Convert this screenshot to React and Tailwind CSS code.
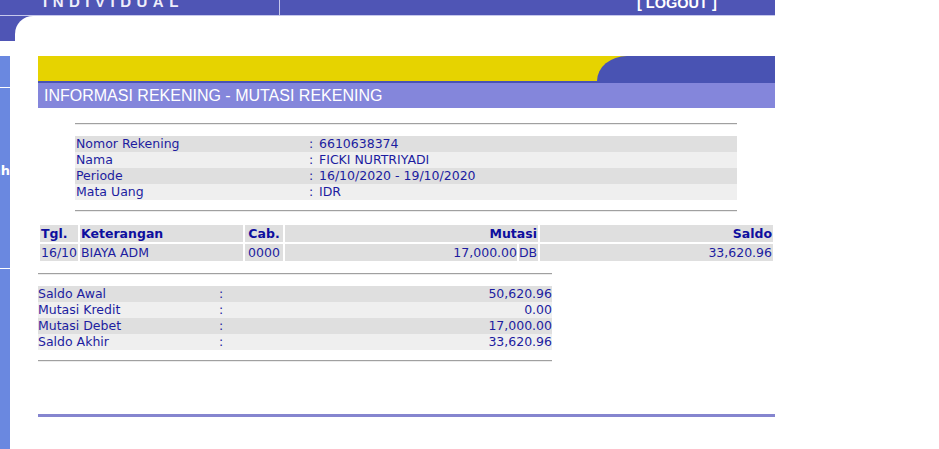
const info = [
  ["Nomor Rekening", "6610638374"],
  ["Nama", "FICKI NURTRIYADI"],
  ["Periode", "16/10/2020 - 19/10/2020"],
  ["Mata Uang", "IDR"],
];

const summary = [
  ["Saldo Awal", "50,620.96"],
  ["Mutasi Kredit", "0.00"],
  ["Mutasi Debet", "17,000.00"],
  ["Saldo Akhir", "33,620.96"],
];

function Rule({ className }) {
  return <div className={"h-0 border-t border-b border-t-[#a0a0a0] border-b-[#ececec] " + className}></div>;
}

export default function App() {
  return (
    <div className="w-[939px] h-[449px] bg-white overflow-hidden font-['DejaVu_Sans',Verdana,sans-serif]">
      {/* Header */}
      <div className="w-[775px] h-[16px] flex bg-[#4f55b5] border-b border-[#c6c8ec] overflow-hidden">
        <div className="w-[280px] shrink-0 pl-[43px] border-r border-[#c6c8ec] overflow-hidden">
          <div className="-mt-[6px] leading-[16px] text-[15px] font-bold tracking-[5.5px] text-[#eeeefa] font-['Liberation_Sans',Arial,sans-serif]">
            INDIVIDUAL
          </div>
        </div>
        <div className="flex-1 pl-[357px] overflow-hidden">
          <div className="-mt-[5px] leading-[16px] text-[14.5px] font-bold text-white whitespace-nowrap font-['Liberation_Sans',Arial,sans-serif]">
            [ LOGOUT ]
          </div>
        </div>
      </div>

      {/* corner */}
      <div className="w-[775px] h-[25px] flex bg-[#4f55b5]">
        <div className="ml-[15px] flex-1 bg-white rounded-tl-[18px]"></div>
      </div>

      <div className="flex mt-[15px]">
        {/* Sidebar */}
        <div className="w-[10px] h-[393px] shrink-0 bg-[#6a88e0] flex flex-col">
          <div className="h-[32px] border-b border-white"></div>
          <div className="h-[181px] border-b border-white overflow-hidden flex justify-end whitespace-nowrap pt-[75px]">
            <span className="text-[13px] leading-[16px] font-bold text-white">Pindah</span>
          </div>
          <div className="flex-1"></div>
        </div>

        {/* Content */}
        <div className="ml-[28px] w-[737px]">
          <div className="h-[25px] flex bg-[#e6d300]">
            <div className="flex-1"></div>
            <div className="w-[178px] bg-[#4953b3] rounded-tl-[30px_25px]"></div>
          </div>
          <div className="h-[2px] bg-[#4953b3]"></div>
          <div className="h-[25px] bg-[#8486db] pl-[6px] text-white text-[16px] leading-[26px] font-['Liberation_Sans',Arial,sans-serif]">
            INFORMASI REKENING - MUTASI REKENING
          </div>

          <Rule className="mt-[15px] ml-[37px] w-[662px]" />

          <div className="mt-[11px] ml-[37px] w-[662px] text-[12.5px] text-[#1c1ca0]">
            {info.map(([label, value], i) => (
              <div key={label} className={"flex h-[16px] leading-[16px] " + (i % 2 === 0 ? "bg-[#dfdfdf]" : "bg-[#efefef]")}>
                <div className="w-[234px] pl-px">{label}</div>
                <div className="w-[10px]">:</div>
                <div>{value}</div>
              </div>
            ))}
          </div>

          <Rule className="mt-[10px] ml-[37px] w-[662px]" />

          <table className="mt-[11px] w-[737px] border-separate border-spacing-[2px] text-[12.5px] text-[#1c1ca0]">
            <thead>
              <tr className="h-[17px] leading-[17px] font-bold text-[#0e0e9e]">
                <th className="w-[38px] bg-[#dfdfdf] text-left px-px p-0">Tgl.</th>
                <th className="w-[163px] bg-[#dfdfdf] text-left px-px p-0">Keterangan</th>
                <th className="w-[38px] bg-[#dfdfdf] text-center p-0">Cab.</th>
                <th colSpan={2} className="bg-[#dfdfdf] text-right px-px p-0">Mutasi</th>
                <th className="w-[233px] bg-[#dfdfdf] text-right px-px p-0">Saldo</th>
              </tr>
            </thead>
            <tbody>
              <tr className="h-[17px] leading-[17px]">
                <td className="bg-[#dfdfdf] px-px p-0">16/10</td>
                <td className="bg-[#dfdfdf] px-px p-0">BIAYA ADM</td>
                <td className="bg-[#dfdfdf] text-center p-0">0000</td>
                <td className="w-[232px] bg-[#dfdfdf] text-right p-0">17,000.00</td>
                <td className="w-[19px] bg-[#dfdfdf] p-0">DB</td>
                <td className="bg-[#dfdfdf] text-right px-px p-0">33,620.96</td>
              </tr>
            </tbody>
          </table>

          <Rule className="mt-[10px] w-[514px]" />

          <div className="mt-[11px] w-[514px] text-[12.5px] text-[#1c1ca0]">
            {summary.map(([label, value], i) => (
              <div key={label} className={"flex h-[16px] leading-[16px] " + (i % 2 === 0 ? "bg-[#dfdfdf]" : "bg-[#efefef]")}>
                <div className="w-[181px]">{label}</div>
                <div className="w-[10px]">:</div>
                <div className="flex-1 text-right">{value}</div>
              </div>
            ))}
          </div>

          <Rule className="mt-[10px] w-[514px]" />

          <div className="mt-[52px] h-[3px] bg-[#8585cf]"></div>
        </div>
      </div>
    </div>
  );
}
